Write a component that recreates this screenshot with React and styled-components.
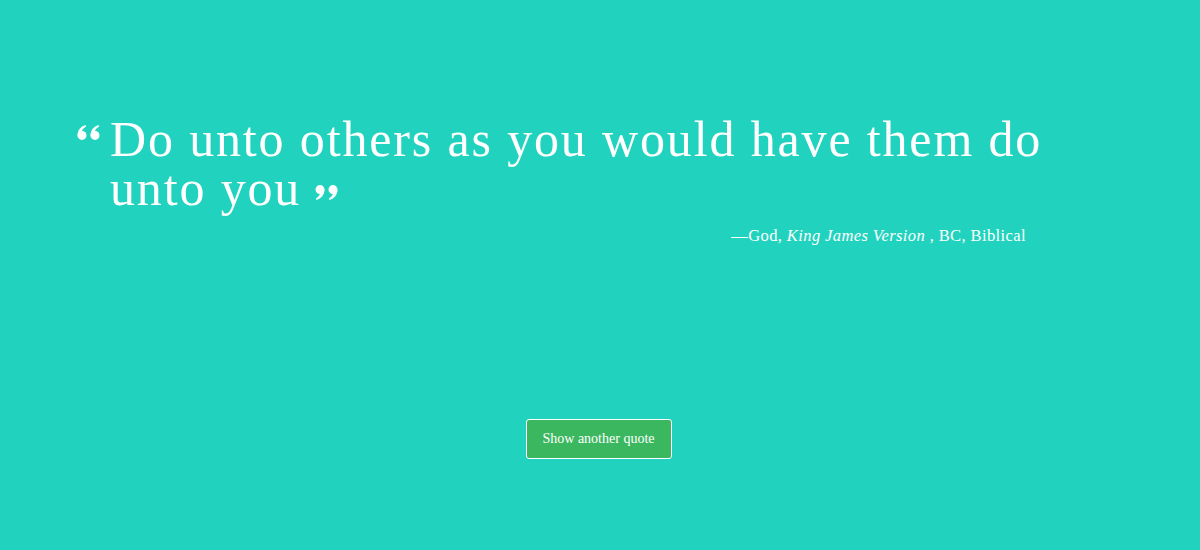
import React from "react";
import styled, { createGlobalStyle } from "styled-components";

const GlobalStyle = createGlobalStyle`
  html, body {
    margin: 0;
    padding: 0;
    background: #21d3be;
  }
`;

const Page = styled.div({
    minHeight: '550px',
    background: '#21d3be',
    color: 'white',
    fontFamily: '"Liberation Serif", "DejaVu Serif", serif',
    display: 'flex',
    flexDirection: 'column',
    alignItems: 'stretch',
    padding: '115px 0 0 77px',
    boxSizing: 'border-box',
})

const QuoteBox = styled.div({
    width: '975px',
    display: 'flex',
    flexDirection: 'column',
})

// hanging open quote: padding + negative indent
const QuoteText = styled.h1({
    margin: 0,
    paddingLeft: '33px',
    textIndent: '-33px',
    fontWeight: 'normal',
    fontSize: '50px',
    lineHeight: '49px',
    letterSpacing: '1.85px',
})

const MarkSvg = styled.svg(props => ({
    width: '23px',
    height: '15px',
    fill: 'white',
    verticalAlign: props.$open ? '16px' : '5px',
    marginRight: props.$open ? '10px' : 0,
    marginLeft: props.$open ? 0 : '14px',
}))

function QuoteMark({ open }){
    const six = 'M0.6,10.5 C0.6,5.2 3.6,1.6 8.4,0 L9.2,1.6 C6.4,3 5,5 4.8,7.2 Z'
    return (
        <MarkSvg $open={open} viewBox="0 0 23 15">
            <g transform={open ? undefined : 'rotate(180 11.5 7.5)'}>
                <path d={six} />
                <circle cx="5" cy="10.4" r="4.5" />
                <path d={six} transform="translate(13 0)" />
                <circle cx="18" cy="10.4" r="4.5" />
            </g>
        </MarkSvg>
    )
}

const Attribution = styled.p({
    margin: '13px 26px 0 0',
    textAlign: 'right',
    fontSize: '16.5px',
    letterSpacing: '0.4px',

    '& cite': {
        fontStyle: 'italic',
    },
})

const ButtonRow = styled.div({
    display: 'flex',
    justifyContent: 'center',
    marginTop: '173px',
    marginLeft: '-77px',
})

const QuoteButton = styled.button({
    width: '146px',
    height: '40px',
    background: '#3bb760',
    color: 'white',
    border: '1px solid white',
    borderRadius: '3px',
    fontFamily: '"Liberation Serif", "DejaVu Serif", serif',
    fontSize: '14px',
    cursor: 'pointer',
    marginLeft: '-3px',
})

export default function App(){
    return(
        <Page>
            <GlobalStyle />
            <QuoteBox>
                <QuoteText>
                    <QuoteMark open />Do unto others as you would have them do unto you<QuoteMark />
                </QuoteText>
                <Attribution>
                    —God, <cite>King James Version</cite> , BC, Biblical
                </Attribution>
            </QuoteBox>
            <ButtonRow>
                <QuoteButton>Show another quote</QuoteButton>
            </ButtonRow>
        </Page>
    );
}
